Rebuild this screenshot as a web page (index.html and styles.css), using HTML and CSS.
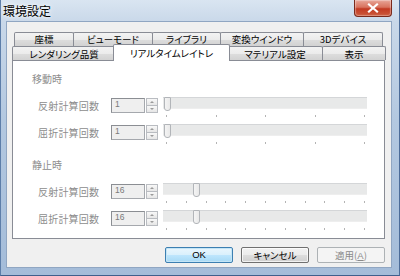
FILE: index.html
```html
<!DOCTYPE html>
<html lang="ja">
<head>
<meta charset="utf-8">
<link rel="stylesheet" href="styles.css">
</head>
<body>
<div class="window">
  <div class="titlebar">
    <span class="title">環境設定</span>
    <div class="close-btn">
      <svg width="12" height="10" viewBox="0 0 12 10"><path d="M2 1.5 L10 8.5 M10 1.5 L2 8.5" stroke="#fff" stroke-width="2.2" stroke-linecap="square"/></svg>
    </div>
  </div>
  <div class="client">
    <div class="tabs">
      <div class="tabrow back">
        <div class="tab">座標</div>
        <div class="tab">ビューモード</div>
        <div class="tab">ライブラリ</div>
        <div class="tab">変換ウインドウ</div>
        <div class="tab">3Dデバイス</div>
      </div>
      <div class="tabrow front">
        <div class="tab">レンダリング品質</div>
        <div class="tab selected">リアルタイムレイトレ</div>
        <div class="tab">マテリアル設定</div>
        <div class="tab">表示</div>
      </div>
    </div>
    <div class="page">
      <div class="group">
        <div class="group-title">移動時</div>
        <div class="row">
          <span class="label">反射計算回数</span>
          <div class="edit">1</div>
          <div class="spin"><span class="up"></span><span class="down"></span></div>
          <div class="slider">
            <div class="track"><span class="thumb" style="left:1px"></span></div>
            <div class="ticks"><i></i><i></i><i></i><i></i><i></i></div>
          </div>
        </div>
        <div class="row">
          <span class="label">屈折計算回数</span>
          <div class="edit">1</div>
          <div class="spin"><span class="up"></span><span class="down"></span></div>
          <div class="slider">
            <div class="track"><span class="thumb" style="left:1px"></span></div>
            <div class="ticks"><i></i><i></i><i></i><i></i><i></i></div>
          </div>
        </div>
      </div>
      <div class="group second">
        <div class="group-title">静止時</div>
        <div class="row">
          <span class="label">反射計算回数</span>
          <div class="edit">16</div>
          <div class="spin"><span class="up"></span><span class="down"></span></div>
          <div class="slider">
            <div class="track"><span class="thumb" style="left:30px"></span></div>
            <div class="ticks"><i></i><i></i><i></i><i></i><i></i><i></i><i></i><i></i><i></i><i></i><i></i></div>
          </div>
        </div>
        <div class="row">
          <span class="label">屈折計算回数</span>
          <div class="edit">16</div>
          <div class="spin"><span class="up"></span><span class="down"></span></div>
          <div class="slider">
            <div class="track"><span class="thumb" style="left:30px"></span></div>
            <div class="ticks"><i></i><i></i><i></i><i></i><i></i><i></i><i></i><i></i><i></i><i></i><i></i></div>
          </div>
        </div>
      </div>
    </div>
    <div class="buttons">
      <div class="btn default">OK</div>
      <div class="btn">キャンセル</div>
      <div class="btn disabled">適用(<u>A</u>)</div>
    </div>
  </div>
</div>
</body>
</html>
```
FILE: styles.css
```css
* { box-sizing: border-box; }
html, body { margin: 0; padding: 0; }
body {
  width: 400px;
  height: 276px;
  overflow: hidden;
  font-family: "Noto Sans CJK JP", "Noto Sans", sans-serif;
  font-feature-settings: "palt";
  background: #6a8bb5;
}
.window {
  width: 400px;
  height: 276px;
  display: flex;
  flex-direction: column;
  background: linear-gradient(to bottom, #d9e5f1 0, #c9d8e9 22px, #b3c8e0 120px, #a4bcd9 276px);
  border-left: 1px solid #5d7ea9;
  border-right: 1px solid #4c6c99;
  border-bottom: 1px solid #3f5f8c;
}
.titlebar {
  height: 21px;
  display: flex;
  justify-content: space-between;
  align-items: flex-start;
}
.title {
  font-size: 12px;
  line-height: 21px;
  padding-left: 2px;
  color: #000;
  text-shadow: 0 0 6px #fff, 0 0 3px #fff;
}
.close-btn {
  width: 38px;
  height: 17px;
  margin-right: 7px;
  border: 1px solid #7a2a1c;
  border-top: none;
  border-radius: 0 0 4px 4px;
  background: linear-gradient(to bottom, #e8a597 0, #d8735e 45%, #c23a22 55%, #cc5a3c 100%);
  display: flex;
  align-items: center;
  justify-content: center;
  box-shadow: inset 0 0 1px 1px rgba(255,255,255,0.35);
}
.client {
  flex: 1;
  margin: 0 7px 7px 5px;
  border: 1px solid #90a6c2;
  background: #f0f0f0;
  display: flex;
  flex-direction: column;
}
.tabs {
  padding: 10px 0 0 5px;
  display: flex;
  flex-direction: column;
}
.tabrow { display: flex; align-items: flex-start; }
.tabrow.back { height: 14px; margin-left: 2px; }
.tabrow.front { height: 14px; }
.tab {
  height: 14px;
  margin-right: -1px;
  border: 1px solid #898c95;
  border-bottom: none;
  border-radius: 2px 2px 0 0;
  background: linear-gradient(to bottom, #f3f3f3 0, #ebebeb 50%, #dddddd 51%, #d2d2d2 100%);
  font-size: 9.5px;
  line-height: 10px;
  color: #000;
  display: flex;
  justify-content: center;
  align-items: center;
  white-space: nowrap;
}
.tabrow.back .tab { height: 14px; padding-bottom: 1px; }
.tabrow.back .tab:nth-child(1) { width: 60px; }
.tabrow.back .tab:nth-child(2) { width: 80px; }
.tabrow.back .tab:nth-child(3) { width: 69px; }
.tabrow.back .tab:nth-child(4) { width: 84px; }
.tabrow.back .tab:nth-child(5) { width: 80px; }
.tabrow.front .tab:nth-child(1) { width: 104px; }
.tabrow.front .tab:nth-child(3) { width: 96px; }
.tabrow.front .tab:nth-child(4) { width: 64px; }
.tab.selected {
  position: relative;
  z-index: 2;
  width: 117px;
  height: 17px;
  margin: -2px -3px 0 -2px;
  background: #fff;
  padding: 1px 0 1px;
}
.page {
  height: 179px;
  margin: 0 6px 0 5px;
  border: 1px solid #898c95;
  background: #fff;
  padding: 11px 0 0 19px;
}
.group-title {
  font-size: 10px;
  line-height: 14px;
  color: #8d8d8d;
}
.group.second { margin-top: 6px; }
.row {
  display: flex;
  align-items: flex-start;
  height: 27px;
  padding-left: 6px;
}
.group-title + .row { margin-top: 12px; }
.label {
  width: 73px;
  font-size: 10px;
  line-height: 15px;
  color: #8d8d8d;
  letter-spacing: 0.2px;
}
.edit {
  width: 34px;
  height: 15px;
  border: 1px solid #a5a8ad;
  border-top-color: #8b8e93;
  border-left-color: #8b8e93;
  background: #efefef;
  font-family: "Liberation Sans", sans-serif;
  font-size: 8.5px;
  line-height: 9px;
  padding: 1px 0 0 3px;
  color: #7a7a7a;
}
.spin {
  width: 12px;
  height: 15px;
  display: flex;
  flex-direction: column;
  margin-left: 1px;
}
.spin span {
  flex: 1;
  border: 1px solid #b9bcc1;
  background: linear-gradient(to bottom, #f8f8f8, #e6e6e6);
  display: flex;
  align-items: center;
  justify-content: center;
}
.spin .down { margin-top: -1px; }
.spin .up::after {
  content: "";
  border-left: 2px solid transparent;
  border-right: 2px solid transparent;
  border-bottom: 2px solid #9a9a9a;
}
.spin .down::after {
  content: "";
  border-left: 2px solid transparent;
  border-right: 2px solid transparent;
  border-top: 2px solid #9a9a9a;
}
.slider {
  width: 204px;
  margin-left: 5px;
  margin-top: -1px;
}
.track {
  position: relative;
  height: 12px;
  background: #e8e9e9;
  border-top: 1px solid #d4d6d8;
  border-bottom: 1px solid #eeeeee;
}
.thumb {
  position: absolute;
  top: -1px;
  width: 7px;
  height: 14px;
  border: 1px solid #b2b5b9;
  border-radius: 1px 1px 3px 3px;
  background: linear-gradient(to right, #f4f4f4, #e9e9e9);
}
.ticks {
  margin-top: 6px;
  height: 2px;
  padding: 0 2px 0 3px;
  display: flex;
  justify-content: space-between;
}
.ticks i {
  width: 1px;
  height: 2px;
  background: #b4b4b4;
}
.buttons {
  display: flex;
  justify-content: flex-end;
  gap: 8px;
  margin-top: 8px;
  padding-right: 6px;
}
.btn {
  width: 68px;
  height: 16px;
  border: 1px solid #707070;
  border-radius: 2px;
  background: linear-gradient(to bottom, #f2f2f2 0, #ebebeb 50%, #dddddd 51%, #cfcfcf 100%);
  font-size: 9.5px;
  line-height: 14px;
  text-align: center;
  color: #000;
  box-shadow: inset 0 0 0 1px rgba(255,255,255,0.7);
}
.btn.default {
  border-color: #3c7fb1;
  background: linear-gradient(to bottom, #eaf6fd 0, #d9f0fc 50%, #bee6fd 51%, #a7d9f5 100%);
  box-shadow: inset 0 0 0 1px #c4e5f6;
  font-family: "Liberation Sans", sans-serif;
}
.btn.disabled {
  border-color: #adb2b5;
  background: #f4f4f4;
  color: #8a8a8a;
  box-shadow: none;
}
.btn u { text-decoration: underline; font-family: "Liberation Sans", sans-serif; }
```
